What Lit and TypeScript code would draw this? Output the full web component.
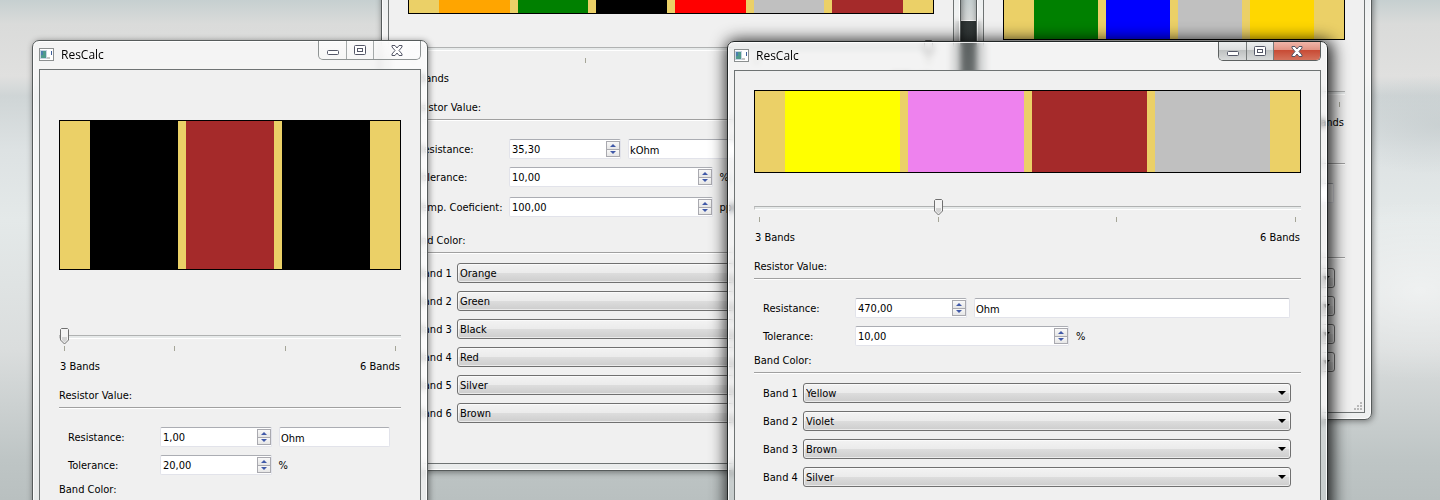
import { LitElement, html, css, svg, nothing } from "lit";
import { customElement, property } from "lit/decorators.js";

const COLORS: Record<string, string> = {
  Black: "#000000",
  Brown: "#a52a2a",
  Red: "#ff0000",
  Orange: "#ffa500",
  Yellow: "#ffff00",
  Green: "#008000",
  Blue: "#0000ff",
  Violet: "#ee82ee",
  Silver: "#c0c0c0",
  Gold: "#ffd700",
};

@customElement("spin-box")
class SpinBox extends LitElement {
  @property() value = "";
  @property() label = "";

  static styles = css`
    :host {
      display: flex;
      box-sizing: border-box;
      min-width: 0;
      height: 20px;
      padding: 1px 0 1px 1px;
      background: #fff;
      border: 1px solid #e2e3ea;
      border-top-color: #abadb3;
      border-radius: 2px;
    }
    input {
      flex: 1;
      min-width: 0;
      padding: 2px 0 0 1px;
      border: 0;
      outline: 0;
      background: none;
      font: inherit;
      color: #000;
    }
    .steps {
      display: flex;
      flex-direction: column;
      width: 14px;
    }
    button {
      display: flex;
      align-items: center;
      justify-content: center;
      flex: 1;
      min-height: 0;
      padding: 0;
      border: 1px solid #a9a9af;
      background: linear-gradient(#f8f8f8, #e6e6e6);
    }
    button + button {
      border-top: 0;
    }
    svg {
      display: block;
    }
  `;

  render() {
    return html`
      <input type="text" aria-label=${this.label} .value=${this.value} />
      <span class="steps">
        <button aria-label="Increase">
          <svg width="6" height="3"><path d="M3 0 6 3H0z" fill="#4059a8" /></svg>
        </button>
        <button aria-label="Decrease">
          <svg width="6" height="3"><path d="M0 0H6L3 3z" fill="#4059a8" /></svg>
        </button>
      </span>
    `;
  }
}

@customElement("res-window")
class ResWindow extends LitElement {
  @property({ type: Array }) bands: string[] = [];
  @property() resistance = "";
  @property() unit = "Ohm";
  @property() tolerance = "";
  @property() coefficient = "";
  @property({ type: Boolean, reflect: true }) active = false;

  static styles = css`
    :host {
      display: block;
      box-sizing: border-box;
      padding: 0 6px 6px;
      border: 1px solid #565b5b;
      border-radius: 7px;
      background: rgba(255, 255, 255, 0.68);
      backdrop-filter: blur(3px);
      box-shadow: inset 0 0 0 1px rgba(255, 255, 255, 0.85), 1px 1px 6px rgba(0, 0, 0, 0.45);
      color: #000;
      font: 11px/14px "DejaVu Sans Condensed", "Noto Sans", sans-serif;
    }
    :host([active]) {
      border-color: #222626;
      background: rgba(255, 255, 255, 0.2);
      box-shadow: inset 0 0 0 1px rgba(255, 255, 255, 0.85), 2px 2px 16px 3px rgba(0, 0, 0, 0.85);
    }
    .title {
      display: flex;
      align-items: flex-start;
      height: 28px;
    }
    .app-icon {
      margin: 7px 6px 0 0;
    }
    h1 {
      flex: 1;
      margin: 6px 0 0;
      padding-left: 1px;
      font: 12px/16px "Open Sans", "Noto Sans", sans-serif;
    }
    .controls {
      display: flex;
      border: 1px solid #8f9494;
      border-top: 0;
      border-radius: 0 0 5px 5px;
      overflow: hidden;
    }
    .controls button {
      display: flex;
      align-items: center;
      justify-content: center;
      width: 28px;
      height: 18px;
      padding: 0;
      border: 0;
      border-right: 1px solid #a5aaaa;
      background: linear-gradient(rgba(255, 255, 255, 0.5), rgba(255, 255, 255, 0.2));
    }
    .controls .max {
      width: 27px;
    }
    .controls .close {
      width: 46px;
      border-right: 0;
    }
    :host([active]) .controls {
      border-color: #5c6060;
    }
    :host([active]) .controls button {
      border-color: #777b7b;
      background: linear-gradient(#eceeee 0, #dcdede 45%, #bec1c1 46%, #d8dada 100%);
    }
    :host([active]) .controls .close {
      background: linear-gradient(#f0b5a9 0, #e29383 45%, #c84b35 46%, #d4725c 100%);
    }
    .client {
      position: relative;
      padding: 19px 19px 40px;
      border: 1px solid #6e7373;
      background: #f0f0f0;
    }
    .picture {
      display: flex;
      gap: 8px;
      box-sizing: border-box;
      height: 83px;
      margin-bottom: 26px;
      padding: 0 30px;
      border: 1px solid #000;
      background: #ebd067;
    }
    :host(.tall) .picture {
      height: 150px;
      margin: 31px 0 58px;
    }
    :host(.medium) .picture {
      height: 150px;
      margin: 17px 0 44px;
    }
    .band {
      flex: 1;
    }
    input[type="range"] {
      display: block;
      appearance: none;
      width: 100%;
      height: 17px;
      margin: 0;
      background: none;
    }
    input[type="range"]::-webkit-slider-runnable-track {
      box-sizing: border-box;
      height: 4px;
      background: #e7eaea;
      border-top: 1px solid #b0b2b2;
      border-bottom: 1px solid #fff;
      border-left: 1px solid #c0c0c0;
    }
    input[type="range"]::-webkit-slider-thumb {
      appearance: none;
      width: 10px;
      height: 17px;
      margin-top: -8px;
      border: 0;
      background: url("data:image/svg+xml,%3Csvg xmlns='http://www.w3.org/2000/svg' width='10' height='17'%3E%3Cpath d='M.5 1.500l1-1h6l1 1v10.500l-4 4-4-4z' fill='%23f4f4f4' stroke='%23707070'/%3E%3Cpath d='M2 9h5v3l-2.500 2.500L2 12z' fill='%23d4d4d4'/%3E%3C/svg%3E") no-repeat;
    }
    .ticks {
      display: flex;
      justify-content: space-between;
      margin-top: 1px;
      padding: 0 5px;
    }
    .ticks i {
      width: 1px;
      height: 5px;
      background: #a5a597;
    }
    .ends {
      display: flex;
      justify-content: space-between;
      margin: 9px 1px 0;
    }
    h2 {
      margin: 15px 0 0;
      padding-bottom: 4px;
      border-bottom: 1px solid #a0a0a0;
      box-shadow: 0 1px #fff;
      font: inherit;
    }
    .form {
      display: grid;
      gap: 8px;
      padding: 19px 11px 0 9px;
    }
    .row {
      display: grid;
      grid-template-columns: 85px minmax(0, 1fr) minmax(0, 1fr);
      gap: 7px;
      align-items: center;
    }
    .row.value {
      grid-template-columns: 85px 112px minmax(0, 1fr);
    }
    .row.coefficient {
      margin-top: 2px;
    }
    .row span,
    .pick label {
      padding-top: 2px;
    }
    .unit {
      box-sizing: border-box;
      width: 100%;
      min-width: 0;
      height: 20px;
      padding: 2px 0 0 1px;
      border: 1px solid #e2e3ea;
      border-top-color: #abadb3;
      border-radius: 2px;
      background: #fff;
      font: inherit;
      color: #000;
    }
    h2.colors {
      margin-top: 8px;
    }
    h2.colors.spaced {
      margin-top: 17px;
    }
    .selects {
      display: grid;
      gap: 8px;
      padding: 10px 10px 0 9px;
    }
    .pick {
      display: grid;
      grid-template-columns: 40px 1fr;
      align-items: center;
    }
    select {
      appearance: none;
      box-sizing: border-box;
      width: 100%;
      height: 20px;
      padding: 2px 2px 0;
      border: 1px solid #707070;
      border-radius: 3px;
      background:
        url("data:image/svg+xml,%3Csvg xmlns='http://www.w3.org/2000/svg' width='8' height='4'%3E%3Cpath d='M0 0h8L4 4z'/%3E%3C/svg%3E") no-repeat right 4px center,
        linear-gradient(#f3f3f3 0, #ebebeb 49%, #dddddd 50%, #cdcdcd 100%);
      box-shadow: inset 0 0 0 1px rgba(255, 255, 255, 0.6);
      font: inherit;
      color: #000;
    }
    .grip {
      position: absolute;
      right: 2px;
      bottom: 2px;
    }
  `;

  private icon() {
    return html`<svg class="app-icon" width="15" height="13" aria-hidden="true">
      <rect x=".5" y=".5" width="14" height="12" fill="#fff" stroke="#8c9090" />
      <rect x="1" y="2" width="7" height="9" fill="#c7d3e2" />
      <rect x="2" y="3" width="5" height="7" fill="#4f9a8c" />
      <rect x="2" y="3" width="2" height="4" fill="#4a7fae" />
      <rect x="12" y="3" width="1" height="4" fill="#3f5f9a" />
      <rect x="8" y="9" width="3" height="2" fill="#c4c4c4" />
    </svg>`;
  }

  render() {
    const dots = [[6, 0], [3, 3], [6, 3], [0, 6], [3, 6], [6, 6]];
    return html`
      <header class="title">
        ${this.icon()}
        <h1>ResCalc</h1>
        <div class="controls">
          <button class="min" aria-label="Minimize">
            <svg width="12" height="14">
              <rect x=".5" y="7.500" width="11" height="4" rx="1" fill="#fff" stroke="#535666" />
            </svg>
          </button>
          <button class="max" aria-label="Maximize">
            <svg width="12" height="10">
              <rect x=".5" y=".5" width="11" height="9" rx="1" fill="#fff" stroke="#535666" />
              <rect x="3.500" y="3.500" width="5" height="3" fill="#fff" stroke="#535666" />
            </svg>
          </button>
          <button class="close" aria-label="Close">
            <svg width="12" height="11">
              <path
                d="M1 .5H4L6 3 8 .5h3v1.500L8 5.500l3 3.500v1.500H8L6 8l-2 2.500H1V9l3-3.500L1 2z"
                fill="#fff"
                stroke="#535666"
                stroke-linejoin="round"
              />
            </svg>
          </button>
        </div>
      </header>
      <main class="client">
        <div class="picture">
          ${this.bands.map((b) => html`<div class="band" style="background:${COLORS[b]}"></div>`)}
        </div>
        <input type="range" min="3" max="6" aria-label="Number of bands" .value=${String(this.bands.length)} />
        <div class="ticks"><i></i><i></i><i></i><i></i></div>
        <div class="ends"><span>3 Bands</span><span>6 Bands</span></div>
        <h2>Resistor Value:</h2>
        <div class="form">
          <div class="row value">
            <span>Resistance:</span>
            <spin-box label="Resistance" .value=${this.resistance}></spin-box>
            <input class="unit" type="text" aria-label="Unit" .value=${this.unit} />
          </div>
          <div class="row">
            <span>Tolerance:</span>
            <spin-box label="Tolerance" .value=${this.tolerance}></spin-box>
            <span>%</span>
          </div>
          ${this.coefficient
            ? html`<div class="row coefficient">
                <span>Temp.&nbsp;Coeficient:</span>
                <spin-box label="Temp. Coeficient" .value=${this.coefficient}></spin-box>
                <span>ppm</span>
              </div>`
            : nothing}
        </div>
        <h2 class="colors ${this.coefficient ? "spaced" : ""}">Band Color:</h2>
        <div class="selects">
          ${this.bands.map(
            (b, i) => html`<div class="pick">
              <label for="band${i}">Band ${i + 1}</label>
              <select id="band${i}">
                ${Object.keys(COLORS).map((c) => html`<option ?selected=${c === b}>${c}</option>`)}
              </select>
            </div>`
          )}
        </div>
        <svg class="grip" width="8" height="8" aria-hidden="true">
          ${dots.map(([x, y]) => svg`<rect x=${x} y=${y} width="2" height="2" fill="#b8b8b8" />`)}
        </svg>
      </main>
    `;
  }
}

@customElement("app-root")
class AppRoot extends LitElement {
  static styles = css`
    :host {
      display: block;
      position: relative;
      height: 100vh;
      overflow: hidden;
      background:
        radial-gradient(ellipse 110px 50px at 1440px 125px, rgba(190, 198, 200, 0.5), transparent),
        radial-gradient(ellipse 160px 90px at 1420px 290px, rgba(255, 255, 255, 0.5), transparent),
        linear-gradient(
          #c6cfd0 0,
          #dadbda 24px,
          #e0e0df 76px,
          #cfd5d6 96px,
          #dde2e3 150px,
          #e4e9e9 220px,
          #dadddd 350px,
          #bec5c5 460px,
          #b9c0c0 500px
        );
    }
    .ridge {
      position: absolute;
      left: 955px;
      top: 20px;
      width: 27px;
      height: 60px;
      background: linear-gradient(172deg, #303636 0, #454c4c 100%);
      border-top: 1px solid #f4f4f4;
    }
    res-window {
      position: absolute;
    }
    .back {
      left: 976px;
      top: -176px;
      width: 396px;
    }
    .six {
      left: 381px;
      top: -118px;
      width: 580px;
    }
    .three {
      left: 32px;
      top: 40px;
      width: 396px;
    }
    .four {
      left: 727px;
      top: 41px;
      width: 601px;
    }
  `;

  render() {
    return html`
      <div class="ridge"></div>
      <res-window
        class="back medium"
        .bands=${["Green", "Blue", "Silver", "Gold"]}
        resistance="56,00"
        tolerance="5,00"
      ></res-window>
      <res-window
        class="six"
        .bands=${["Orange", "Green", "Black", "Red", "Silver", "Brown"]}
        resistance="35,30"
        unit="kOhm"
        tolerance="10,00"
        coefficient="100,00"
      ></res-window>
      <res-window
        class="three tall"
        .bands=${["Black", "Brown", "Black"]}
        resistance="1,00"
        tolerance="20,00"
      ></res-window>
      <res-window
        class="four"
        active
        .bands=${["Yellow", "Violet", "Brown", "Silver"]}
        resistance="470,00"
        tolerance="10,00"
      ></res-window>
    `;
  }
}
